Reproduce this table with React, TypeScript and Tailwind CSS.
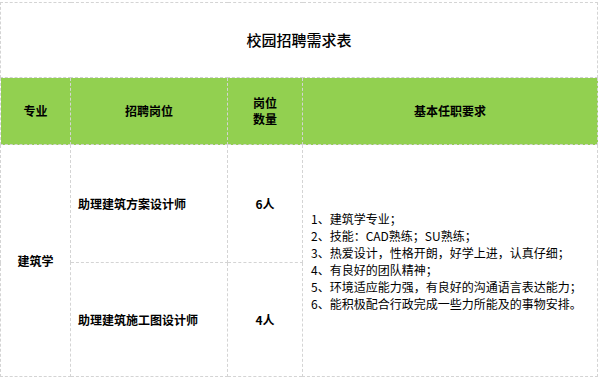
const requirements = [
  "1、建筑学专业；",
  "2、技能：CAD熟练；SU熟练；",
  "3、热爱设计，性格开朗，好学上进，认真仔细；",
  "4、有良好的团队精神；",
  "5、环境适应能力强，有良好的沟通语言表达能力；",
  "6、能积极配合行政完成一些力所能及的事物安排。",
];

const cell = "border border-dashed border-[#d4d4d4] p-0";

export default function App() {
  return (
    <div
      className="w-[598px] h-[378px] bg-white pt-[2px] text-black"
      style={{ fontFamily: '"Noto Sans CJK SC", "Noto Sans", sans-serif' }}
    >
      <table className="border-collapse table-fixed w-[597px]">
        <colgroup>
          <col className="w-[70px]" />
          <col className="w-[157px]" />
          <col className="w-[75px]" />
          <col className="w-[295px]" />
        </colgroup>
        <tbody>
          <tr className="h-[75px]">
            <td colSpan={4} className="border border-dashed border-[#d4d4d4] border-b-solid border-b-[#d0d0d0] text-center text-[15px] font-medium">
              校园招聘需求表
            </td>
          </tr>
          <tr className="h-[67px] bg-[#92d050] text-[12px] font-bold leading-[16px]">
            <td className={`${cell} border-t-solid border-t-[#d0d0d0] text-center`}>专业</td>
            <td className={`${cell} border-t-solid border-t-[#d0d0d0] text-center`}>招聘岗位</td>
            <td className={`${cell} border-t-solid border-t-[#d0d0d0] text-center`}>
              岗位
              <br />
              数量
            </td>
            <td className={`${cell} border-t-solid border-t-[#d0d0d0] text-center`}>基本任职要求</td>
          </tr>
          <tr className="h-[118px] text-[12px]">
            <td rowSpan={2} className={`${cell} text-center font-bold`}>建筑学</td>
            <td className={`${cell} pl-[7px] font-bold`}>助理建筑方案设计师</td>
            <td className={`${cell} text-center font-bold`}>6人</td>
            <td rowSpan={2} className={`${cell} pl-[8px]`}>
              <div className="flex flex-col leading-[17px]">
                {requirements.map((r) => (
                  <span key={r}>{r}</span>
                ))}
              </div>
            </td>
          </tr>
          <tr className="h-[114px] text-[12px]">
            <td className={`${cell} pl-[7px] font-bold`}>助理建筑施工图设计师</td>
            <td className={`${cell} text-center font-bold`}>4人</td>
          </tr>
        </tbody>
      </table>
    </div>
  );
}
